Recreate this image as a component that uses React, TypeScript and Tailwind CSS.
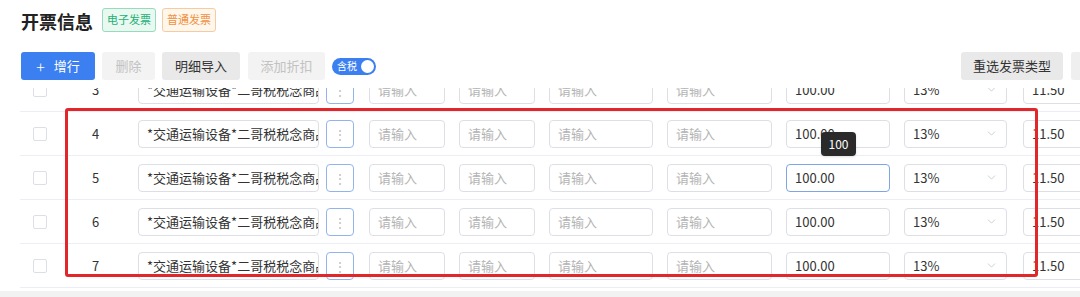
import { ChevronDown } from 'lucide-react';

const rows = [3, 4, 5, 6, 7];

const inputBox = 'h-[28px] shrink-0 flex items-center rounded-[4px] border border-[#dcdfe6] bg-white px-[8px] text-[13px]';

const Placeholder = ({ w }: { w: string }) => (
    <div className={`${inputBox} ${w} text-[#b4b4b4]`}>请输入</div>
);

const Row = ({ n }: { n: number }) => {
    const focused = n === 5;
    return (
        <div className="flex items-center h-[44px] border-b border-[#ebeef5] text-[#333]">
            <div className="w-[40px] shrink-0 flex justify-center">
                <div className="w-[14px] h-[14px] rounded-[2px] border border-[#dcdfe6] bg-white" />
            </div>
            <div className="w-[71px] shrink-0 text-center text-[13px]">{n}</div>
            <div className={`${inputBox} ml-[7px] w-[181px] overflow-hidden whitespace-nowrap`}>
                *交通运输设备*二哥税税念商品
            </div>
            <div className="ml-[7px] w-[28px] h-[28px] shrink-0 rounded-[4px] border border-[#93b4ea] bg-white flex items-center justify-center text-[#b9b9b9] text-[12px] leading-none">
                ⋮
            </div>
            <div className="ml-[15px]"><Placeholder w="w-[76px]" /></div>
            <div className="ml-[14px]"><Placeholder w="w-[76px]" /></div>
            <div className="ml-[14px]"><Placeholder w="w-[104px]" /></div>
            <div className="ml-[14px]"><Placeholder w="w-[105px]" /></div>
            <div
                className={`ml-[14px] w-[104px] h-[28px] shrink-0 flex items-center rounded-[4px] border bg-white px-[8px] text-[13px] ${
                    focused ? 'border-[#7ea6e4]' : 'border-[#dcdfe6]'
                }`}
            >
                100.00
            </div>
            <div className={`${inputBox} ml-[14px] w-[103px] justify-between`}>
                <span>13%</span>
                <ChevronDown size={13} strokeWidth={1.5} className="text-[#c0c4cc]" />
            </div>
            <div className={`${inputBox} ml-[16px] w-[100px]`}>11.50</div>
        </div>
    );
};

export default function App() {
    return (
        <div
            className="relative w-[1080px] h-[297px] overflow-hidden bg-white"
            style={{ fontFamily: '"Noto Sans CJK SC", "Noto Sans", sans-serif' }}
        >
            {/* header */}
            <div className="flex items-center h-[25px] mt-[7px] pl-[21px]">
                <h2 className="text-[18px] font-bold text-[#222] leading-none mt-[3px]">开票信息</h2>
                <span className="ml-[9px] h-[24px] px-[4px] flex items-center rounded-[3px] border border-[#95dcbc] bg-[#e9f8f1] text-[11px] text-[#22b073]">
                    电子发票
                </span>
                <span className="ml-[6px] h-[24px] px-[4px] flex items-center rounded-[3px] border border-[#f7cba1] bg-[#fff6ec] text-[11px] text-[#f19140]">
                    普通发票
                </span>
            </div>

            {/* toolbar (wider than the viewport, last button runs off the edge) */}
            <div className="flex items-center w-[1131px] h-[28px] mt-[20px] pl-[21px] text-[13px]">
                <button className="w-[74px] h-[28px] rounded-[3px] bg-[#3b7ff0] text-white flex items-center justify-center gap-[9px]">
                    <span className="text-[16px] leading-none font-light">+</span>
                    <span>增行</span>
                </button>
                <button className="ml-[7px] w-[53px] h-[28px] rounded-[3px] bg-[#f3f3f3] text-[#c2c2c2]">删除</button>
                <button className="ml-[7px] w-[78px] h-[28px] rounded-[3px] bg-[#e9e9e9] text-[#333]">明细导入</button>
                <button className="ml-[8px] w-[77px] h-[28px] rounded-[3px] bg-[#f3f3f3] text-[#c2c2c2]">添加折扣</button>
                <div className="ml-[7px] w-[44px] h-[17px] rounded-full bg-[#3b7ff0] flex items-center justify-between pl-[5px] pr-[2px]">
                    <span className="text-[10px] text-white leading-none">含税</span>
                    <span className="w-[13px] h-[13px] rounded-full bg-white" />
                </div>
                <div className="flex-1" />
                <button className="w-[102px] h-[28px] rounded-[3px] bg-[#e9e9e9] text-[#333] shrink-0">重选发票类型</button>
                <button className="ml-[8px] w-[60px] h-[28px] rounded-[3px] bg-[#efefef] shrink-0" />
            </div>

            {/* table viewport */}
            <div className="mt-[8px] h-[203px] overflow-hidden pl-[20px]">
                <div className="-mt-[20px] w-[1200px]">
                    {rows.map((n) => (
                        <Row key={n} n={n} />
                    ))}
                </div>
            </div>
            <div className="h-[6px] bg-[#f2f2f2]" />

            {/* tooltip */}
            <div className="absolute left-[821px] top-[132px] w-[35px] h-[24px] rounded-[4px] bg-[#2a2a2a] text-white text-[12px] flex items-center justify-center shadow">
                100
            </div>

            {/* red annotation */}
            <div className="absolute left-[65px] top-[108px] w-[973px] h-[169px] border-[3px] border-[#e3262a] rounded-[3px] pointer-events-none" />
        </div>
    );
}
